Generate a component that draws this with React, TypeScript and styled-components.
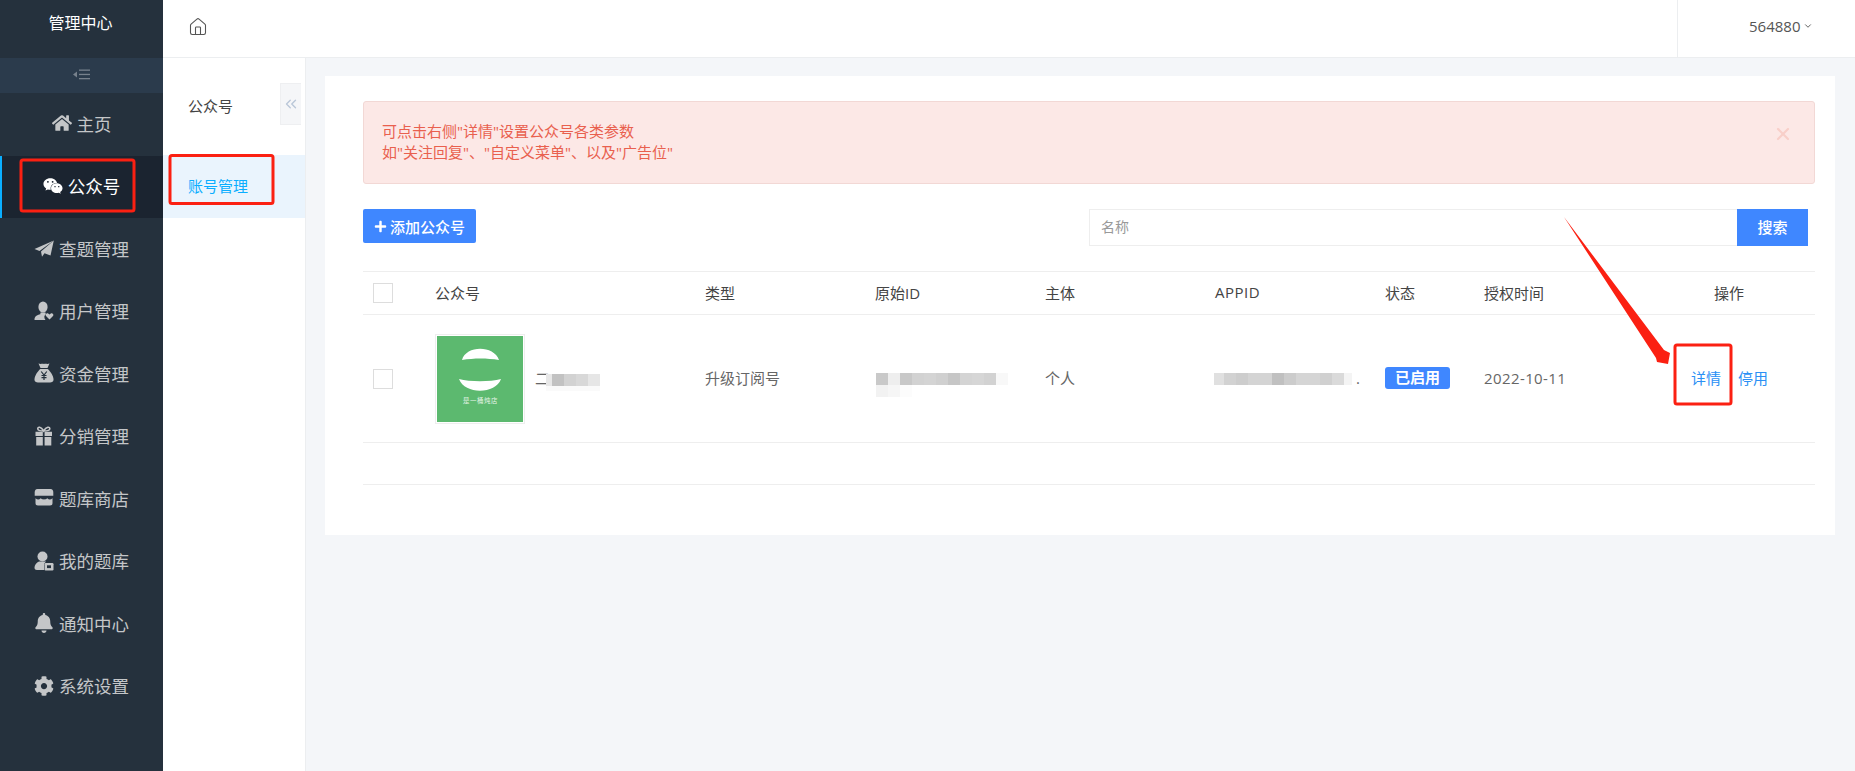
import styled, { createGlobalStyle } from 'styled-components'
import { ChevronDown, ChevronsLeft, House, X } from 'lucide-react'
import { FaBell, FaCog, FaHome, FaPlus, FaWeixin } from 'react-icons/fa'

const GlobalStyle = createGlobalStyle`
  html, body {
    margin: 0;
    height: 100%;
    overflow: hidden;
  }
  body {
    font-family: "Open Sans", "Noto Sans CJK SC", sans-serif;
    font-size: 15px;
    color: #666;
    background: #f4f6f9;
  }
`

const Page = styled.div`
  display: grid;
  grid-template-columns: 163px 1fr;
  height: 771px;
`

const Sidebar = styled.aside`
  background: #25313d;
  display: flex;
  flex-direction: column;
`

const Brand = styled.div`
  height: 58px;
  line-height: 46px;
  text-align: center;
  color: #fff;
  font-size: 16px;
  padding-right: 2px;
`

const CollapseBar = styled.div`
  height: 35px;
  background: #2b3b4c;
  display: flex;
  align-items: center;
  justify-content: center;
  padding-bottom: 3px;
  box-sizing: border-box;
`

const SideItem = styled.div<{ $active?: boolean }>`
  height: 62.5px;
  display: flex;
  align-items: center;
  justify-content: center;
  gap: 5px;
  font-size: 17.5px;
  box-sizing: border-box;
  color: ${p => (p.$active ? '#fff' : '#c4c6c8')};
  background: ${p => (p.$active ? '#1b2430' : 'transparent')};
  border-left: 2px solid ${p => (p.$active ? '#0aaeff' : 'transparent')};
  padding: 0 2px 2px 0;
`

const SideIcon = styled.span`
  width: 20px;
  height: 20px;
  display: flex;
  align-items: center;
  justify-content: center;
  flex: none;
`

const Right = styled.div`
  display: flex;
  flex-direction: column;
  min-width: 0;
`

const Header = styled.header`
  height: 57px;
  background: #fff;
  border-bottom: 1px solid #eceef0;
  display: flex;
  align-items: center;
  justify-content: space-between;
`

const HomeLink = styled.div`
  margin: 0 0 3px 25px;
  display: flex;
  color: #555;
`

const UserMenu = styled.div`
  width: 178px;
  height: 100%;
  border-left: 1px solid #eceef0;
  display: flex;
  align-items: center;
  gap: 3px;
  padding: 0 0 5px 71px;
  box-sizing: border-box;
  color: #555;
`

const Body = styled.div`
  flex: 1;
  display: flex;
  min-height: 0;
`

const SubNav = styled.nav`
  width: 143px;
  flex: none;
  background: #fff;
  border-right: 1px solid #eceef0;
  box-sizing: border-box;
`

const SubHead = styled.div`
  height: 97px;
  padding: 25px 4px 0 25px;
  box-sizing: border-box;
  display: flex;
  justify-content: space-between;
  align-items: flex-start;
  color: #444;
`

const SubTitle = styled.div`
  line-height: 42px;
  padding-top: 2px;
`

const FoldTab = styled.div`
  width: 21px;
  height: 42px;
  background: #f5f6f8;
  border: 1px solid #eeeff1;
  border-right: 0;
  box-sizing: border-box;
  display: flex;
  align-items: center;
  justify-content: center;
  color: #bac7d8;
`

const SubItem = styled.div`
  height: 63px;
  line-height: 63px;
  padding-left: 25px;
  background: #eaf4fd;
  color: #0aaeff;
`

const Content = styled.main`
  flex: 1;
  padding: 18px 20px 18px 19px;
  min-width: 0;
`

const Card = styled.section`
  background: #fff;
  height: 459px;
  padding: 25px 20px 0 38px;
  box-sizing: border-box;
`

const Alert = styled.div`
  height: 83px;
  box-sizing: border-box;
  background: #fce8e6;
  border: 1px solid #f2d8d5;
  border-radius: 3px;
  padding: 19px 24px 0 18px;
  display: flex;
  justify-content: space-between;
  color: #e9604e;
  font-size: 15px;
  line-height: 21px;
`

const AlertClose = styled.div`
  color: #f8cfc9;
  display: flex;
  margin: 3px -3px 0 0;
`

const Toolbar = styled.div`
  display: flex;
  justify-content: space-between;
  align-items: flex-start;
  margin-top: 25px;
  padding-right: 7px;
`

const AddButton = styled.div`
  width: 113px;
  height: 34px;
  background: #3f87ff;
  border-radius: 2px;
  color: #fff;
  display: flex;
  align-items: center;
  justify-content: center;
  gap: 3px;
  font-weight: 500;
`

const SearchBox = styled.div`
  display: flex;
  height: 37px;
`

const SearchInput = styled.div`
  width: 648px;
  box-sizing: border-box;
  border: 1px solid #eeeeee;
  border-right: 0;
  padding-left: 11px;
  line-height: 33px;
  color: #999;
  font-size: 14px;
`

const SearchButton = styled.div`
  width: 71px;
  background: #3f87ff;
  color: #fff;
  text-align: center;
  line-height: 37px;
  font-weight: 500;
`

const Table = styled.table`
  width: 100%;
  margin-top: 25px;
  border-collapse: collapse;
  table-layout: fixed;
  border-top: 1px solid #eeeeee;
`

const Th = styled.th<{ $indent?: number }>`
  height: 43px;
  padding: 0 0 2px ${p => p.$indent ?? 0}px;
  box-sizing: border-box;
  text-align: left;
  font-weight: 400;
  color: #444;
  border-bottom: 1px solid #eeeeee;
`

const Td = styled.td<{ $indent?: number; $latin?: boolean }>`
  height: 128px;
  padding: 0 0 2px ${p => p.$indent ?? 0}px;
  box-sizing: border-box;
  border-bottom: 1px solid #eeeeee;
  vertical-align: middle;
  letter-spacing: ${p => (p.$latin ? '0.4px' : 'normal')};
`

const EmptyRow = styled.td`
  height: 42px;
  padding: 0;
  box-sizing: border-box;
  border-bottom: 1px solid #eeeeee;
`

const Check = styled.div`
  width: 20px;
  height: 20px;
  box-sizing: border-box;
  border: 1px solid #dddddd;
  background: #fff;
  margin: 2px 0 0 10px;
`

const LatinHead = styled.span`
  letter-spacing: 0.5px;
`

const Account = styled.div`
  display: flex;
  align-items: center;
  gap: 10px;
  margin-top: 2px;
`

const Thumb = styled.div`
  width: 90px;
  height: 90px;
  box-sizing: border-box;
  border: 1px solid #eeeeee;
  padding: 1px;
  flex: none;
`

const AccountName = styled.div`
  display: flex;
  align-items: center;
`

const FirstChar = styled.span`
  width: 11px;
  overflow: visible;
  white-space: nowrap;
  position: relative;
  top: -1px;
`

const Mosaic = styled.div`
  height: 12px;
  position: relative;
  z-index: 0;
  top: 1px;
`

const TileRow = styled.div`
  display: flex;
`

const Tile = styled.div<{ $w: number; $h?: number; $c: string }>`
  width: ${p => p.$w}px;
  height: ${p => p.$h ?? 12}px;
  background: ${p => p.$c};
  flex: none;
`

const AppId = styled.div`
  display: flex;
  align-items: center;
  margin-left: -1px;
`

const Badge = styled.span`
  display: inline-block;
  width: 65px;
  height: 22px;
  line-height: 21px;
  text-align: center;
  background: #3f87ff;
  color: #fff;
  border-radius: 3px;
  font-weight: 700;
`

const Actions = styled.div`
  display: flex;
  gap: 17px;
`

const LinkText = styled.span`
  color: #2b90f5;
`

const Annotations = styled.svg`
  position: absolute;
  left: 0;
  top: 0;
  pointer-events: none;
`

const PlaneIcon = () => (
  <svg width="20" height="20" viewBox="0 0 20 20" fill="currentColor">
    <path d="M19.8 2.5 L0.5 11 L5.5 13 Z" />
    <path d="M19.8 2.5 L7 13.5 L8 18.8 L10.5 15.2 L16.5 17.5 Z" />
  </svg>
)

const UserHeartIcon = () => (
  <svg width="20" height="20" viewBox="0 0 20 20" fill="currentColor">
    <ellipse cx="9" cy="6" rx="4.6" ry="5.6" />
    <path d="M6.5 11.5 L11.5 11.5 L11.8 13.2 C9.8 14.4 10 17 11.5 19 L0.5 19 C0.3 15.5 3 13.8 6.3 13.2 Z" />
    <path d="M15.5 18.5 L12 15 C10.8 13.4 13 11.4 14.5 12.8 L15.5 13.6 L16.5 12.8 C18 11.4 20.2 13.4 19 15 Z" />
  </svg>
)

const MoneyBagIcon = () => (
  <svg width="20" height="20" viewBox="0 0 20 20">
    <path fill="currentColor" d="M4.5 0.5 C6.5 1.5 8 0.5 10 1 C12 0.5 13.5 1.5 15.5 0.5 L13.5 5 L6.5 5 Z" />
    <path fill="currentColor" d="M6.3 6 L13.7 6 C16 8 19.5 12.5 19.5 16.5 C19.5 18.8 18 19.5 16 19.5 L4 19.5 C2 19.5 0.5 18.8 0.5 16.5 C0.5 12.5 4 8 6.3 6 Z" />
    <path stroke="#25313d" strokeWidth="1.2" fill="none" d="M7.2 8.5 L10 12 L12.8 8.5 M10 12 L10 17 M7.5 12.5 L12.5 12.5 M7.5 14.7 L12.5 14.7" />
  </svg>
)

const GiftIcon = () => (
  <svg width="20" height="20" viewBox="0 0 20 20">
    <path fill="none" stroke="currentColor" strokeWidth="1.6" d="M9.6 5 C7 0.5 3.5 0.3 3.8 3 C4 4.6 7 5 9.6 5 C12.2 5 15.6 4.6 15.8 3 C16.1 0.3 12.4 0.5 9.6 5 Z" />
    <path fill="currentColor" d="M1.5 5.8 L8.8 5.8 L8.8 10 L1.5 10 Z M10.6 5.8 L18 5.8 L18 10 L10.6 10 Z M2.2 11 L8.8 11 L8.8 19.5 L2.2 19.5 Z M10.6 11 L17.3 11 L17.3 19.5 L10.6 19.5 Z" />
  </svg>
)

const StoreIcon = () => (
  <svg width="20" height="20" viewBox="0 0 20 20">
    <path fill="currentColor" d="M3.5 1 L16.5 1 C18.5 1 19.3 2.5 19.3 4.5 L19.3 7.8 L0.7 7.8 L0.7 4.5 C0.7 2.5 1.5 1 3.5 1 Z" />
    <path fill="currentColor" d="M1.5 10.2 C3.5 11.8 5 11.8 6.7 10.2 C8.3 11.8 11.7 11.8 13.3 10.2 C15 11.8 16.5 11.8 18.5 10.2 L18.5 15 C18.5 16.8 17.5 17.5 16 17.5 L4 17.5 C2.5 17.5 1.5 16.8 1.5 15 Z" />
  </svg>
)

const UserBoxIcon = () => (
  <svg width="20" height="20" viewBox="0 0 20 20">
    <circle cx="8.5" cy="5.5" r="5" fill="currentColor" />
    <path fill="currentColor" d="M5 10.5 L12 10.5 L10 13 L10 19 L3 19 C1 19 0.5 17.8 0.5 16.5 C0.5 14 2.5 11.5 5 10.5 Z" />
    <rect x="10.5" y="12" width="9" height="7.5" rx="1.2" fill="currentColor" />
    <rect x="13" y="14.3" width="4" height="2.8" fill="#25313d" />
  </svg>
)

const FoldIcon = () => (
  <svg width="18" height="11" viewBox="0 0 18 11" fill="#77818c">
    <path d="M0 5.5 L4 2.5 L4 8.5 Z" />
    <rect x="6" y="0.5" width="11" height="1.3" />
    <rect x="6" y="4.8" width="11" height="1.3" />
    <rect x="6" y="9" width="11" height="1.3" />
  </svg>
)

const Logo = () => (
  <svg width="86" height="86" viewBox="0 0 86 86">
    <rect width="86" height="86" fill="#5cb96f" />
    <path d="M25 24 C29 9 57 9 62 24 C50 22 37 22 25 24 Z" fill="#fff" />
    <path d="M22 43 C33 46 53 46 64 43 C59 58 28 59 22 43 Z" fill="#fff" />
    <text x="43.5" y="67" textAnchor="middle" fontSize="6.4" fill="#e4f4e8" letterSpacing="0.6">是一桶炖店</text>
  </svg>
)

const navItems = [
  { label: '主页', icon: <FaHome size={20} /> },
  { label: '公众号', icon: <FaWeixin size={20} />, active: true },
  { label: '查题管理', icon: <PlaneIcon /> },
  { label: '用户管理', icon: <UserHeartIcon /> },
  { label: '资金管理', icon: <MoneyBagIcon /> },
  { label: '分销管理', icon: <GiftIcon /> },
  { label: '题库商店', icon: <StoreIcon /> },
  { label: '我的题库', icon: <UserBoxIcon /> },
  { label: '通知中心', icon: <FaBell size={20} /> },
  { label: '系统设置', icon: <FaCog size={20} /> },
]

const nameTiles: [number, string][] = [[6, '#e8e8e8'], [12, '#c2c2c2'], [12, '#d2d2d2'], [12, '#d8d8d8'], [12, '#e6e6e6']]
const originTiles: [number, string][] = [
  [12, '#c9c9c9'], [12, '#eeeeee'], [12, '#c8c8c8'], [12, '#d2d2d2'], [12, '#d4d4d4'], [12, '#d0d0d0'],
  [12, '#c6c6c6'], [12, '#d4d4d4'], [12, '#d6d6d6'], [12, '#d2d2d2'], [12, '#f8f8f8'],
]
const originLower: [number, string][] = [[12, '#f2f2f2'], [12, '#f6f6f6'], [12, '#fcfcfc']]
const appTiles: [number, string][] = [
  [10, '#e0e0e0'], [12, '#d2d2d2'], [12, '#cdcdcd'], [24, '#d4d4d4'], [12, '#c0c0c0'], [12, '#cccccc'],
  [24, '#d5d5d5'], [12, '#d0d0d0'], [12, '#dadada'], [8, '#f4f4f4'],
]

const Tiles = ({ tiles, h }: { tiles: [number, string][]; h?: number }) => (
  <TileRow>
    {tiles.map(([w, c], i) => <Tile key={i} $w={w} $h={h} $c={c} />)}
  </TileRow>
)

export default function App() {
  return (
    <>
      <GlobalStyle />
      <Page>
        <Sidebar>
          <Brand>管理中心</Brand>
          <CollapseBar><FoldIcon /></CollapseBar>
          {navItems.map(item => (
            <SideItem key={item.label} $active={item.active}>
              <SideIcon>{item.icon}</SideIcon>
              {item.label}
            </SideItem>
          ))}
        </Sidebar>
        <Right>
          <Header>
            <HomeLink><House size={20} strokeWidth={1.3} /></HomeLink>
            <UserMenu>
              564880
              <ChevronDown size={10} strokeWidth={2.2} />
            </UserMenu>
          </Header>
          <Body>
            <SubNav>
              <SubHead>
                <SubTitle>公众号</SubTitle>
                <FoldTab><ChevronsLeft size={18} strokeWidth={1.8} /></FoldTab>
              </SubHead>
              <SubItem>账号管理</SubItem>
            </SubNav>
            <Content>
              <Card>
                <Alert>
                  <div>
                    可点击右侧"详情"设置公众号各类参数
                    <br />
                    如"关注回复"、"自定义菜单"、以及"广告位"
                  </div>
                  <AlertClose><X size={20} strokeWidth={2.6} /></AlertClose>
                </Alert>
                <Toolbar>
                  <AddButton><FaPlus size={13} />添加公众号</AddButton>
                  <SearchBox>
                    <SearchInput>名称</SearchInput>
                    <SearchButton>搜索</SearchButton>
                  </SearchBox>
                </Toolbar>
                <Table>
                  <colgroup>
                    <col width="72" />
                    <col width="270" />
                    <col width="170" />
                    <col width="170" />
                    <col width="170" />
                    <col width="170" />
                    <col width="99" />
                    <col width="207" />
                    <col />
                  </colgroup>
                  <thead>
                    <tr>
                      <Th><Check /></Th>
                      <Th>公众号</Th>
                      <Th>类型</Th>
                      <Th>原始ID</Th>
                      <Th>主体</Th>
                      <Th><LatinHead>APPID</LatinHead></Th>
                      <Th>状态</Th>
                      <Th>授权时间</Th>
                      <Th $indent={23}>操作</Th>
                    </tr>
                  </thead>
                  <tbody>
                    <tr>
                      <Td><Check /></Td>
                      <Td>
                        <Account>
                          <Thumb><Logo /></Thumb>
                          <AccountName>
                            <FirstChar>二</FirstChar>
                            <Mosaic>
                              <Tiles tiles={nameTiles} />
                              <Tile $w={54} $h={5} $c="#fafafa" />
                            </Mosaic>
                          </AccountName>
                        </Account>
                      </Td>
                      <Td>升级订阅号</Td>
                      <Td $indent={1}>
                        <Mosaic>
                          <Tiles tiles={originTiles} />
                          <Tiles tiles={originLower} />
                        </Mosaic>
                      </Td>
                      <Td>个人</Td>
                      <Td>
                        <AppId>
                          <Mosaic><Tiles tiles={appTiles} /></Mosaic>
                          &nbsp;.
                        </AppId>
                      </Td>
                      <Td><Badge>已启用</Badge></Td>
                      <Td $latin>2022-10-11</Td>
                      <Td>
                        <Actions>
                          <LinkText>详情</LinkText>
                          <LinkText>停用</LinkText>
                        </Actions>
                      </Td>
                    </tr>
                    <tr><EmptyRow colSpan={9} /></tr>
                  </tbody>
                </Table>
              </Card>
            </Content>
          </Body>
        </Right>
      </Page>
      <Annotations width="1855" height="771" viewBox="0 0 1855 771">
        <g fill="none" stroke="#fb2012" strokeWidth="3">
          <rect x="21" y="160" width="113" height="51" rx="2" />
          <rect x="170" y="155.5" width="103" height="48" rx="2" />
          <rect x="1675" y="345" width="56" height="59" rx="2" />
        </g>
        <polygon fill="#fb2012" points="1564,217 1664,350 1670,353 1668,364 1657,362 1656,358" />
      </Annotations>
    </>
  )
}
